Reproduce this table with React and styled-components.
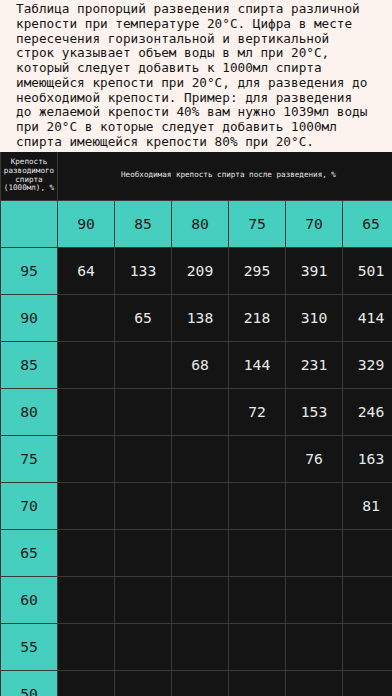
import React from "react";
import styled, { createGlobalStyle } from "styled-components";

const GlobalStyle = createGlobalStyle`
  html, body {
    margin: 0;
    padding: 0;
    overflow: hidden;
    background: #fcf2ee;
  }
`;

const strengths = [90, 85, 80, 75, 70, 65];

const rows = [
  { from: 95, values: [64, 133, 209, 295, 391, 501] },
  { from: 90, values: [null, 65, 138, 218, 310, 414] },
  { from: 85, values: [null, null, 68, 144, 231, 329] },
  { from: 80, values: [null, null, null, 72, 153, 246] },
  { from: 75, values: [null, null, null, null, 76, 163] },
  { from: 70, values: [null, null, null, null, null, 81] },
  { from: 65, values: [] },
  { from: 60, values: [] },
  { from: 55, values: [] },
  { from: 50, values: [] },
  { from: 45, values: [] },
];

const App = () => {
  return (
    <Page>
      <GlobalStyle />
      <Intro>
        Таблица пропорций разведения спирта различной крепости при
        температуре 20°C. Цифра в месте пересечения горизонтальной и
        вертикальной строк указывает объем воды в мл при 20°C, который
        следует добавить к 1000мл спирта имеющейся крепости при 20°C, для
        разведения до необходимой крепости. Пример: для разведения до
        желаемой крепости 40% вам нужно 1039мл воды при 20°C в которые
        следует добавить 1000мл спирта имеющейся крепости 80% при 20°C.
      </Intro>
      <TableWrap>
        <Grid>
          <HeadCell>
            Крепость
            <br />
            разводимого
            <br />
            спирта
            <br />
            (1000мл), %
          </HeadCell>
          <HeadCell $span={6}>
            Необходимая крепость спирта после разведения, %
          </HeadCell>
          <Cell $accent />
          {strengths.map((s) => (
            <Cell key={s} $accent>
              {s}
            </Cell>
          ))}
          {rows.map((row) => (
            <React.Fragment key={row.from}>
              <Cell $accent>{row.from}</Cell>
              {strengths.map((s, i) => (
                <Cell key={s}>{row.values[i] ?? ""}</Cell>
              ))}
            </React.Fragment>
          ))}
        </Grid>
      </TableWrap>
    </Page>
  );
};

const Page = styled.div`
  width: 392px;
  height: 696px;
  overflow: hidden;
  background: #fcf2ee;
`;

const Intro = styled.p`
  margin: 0;
  padding: 2px 20px 2px 16px;
  font-family: "DejaVu Sans Mono", monospace;
  font-size: 12.7px;
  line-height: 14.75px;
  color: #161616;
`;

const TableWrap = styled.div`
  width: 392px;
  overflow: hidden;
  background: #141414;
`;

const Grid = styled.div`
  display: grid;
  grid-template-columns: repeat(7, 56px);
  grid-auto-rows: 46px;
  grid-template-rows: 48px;
  gap: 1px;
  padding-left: 1px;
  width: max-content;
  background: #3b3b36;
  font-family: "DejaVu Sans Mono", monospace;
`;

const HeadCell = styled.div`
  grid-column: span ${(p) => p.$span || 1};
  display: flex;
  align-items: center;
  justify-content: center;
  text-align: center;
  background: #141414;
  color: #e4e4e4;
  font-size: 7.6px;
  line-height: 8.6px;
`;

const Cell = styled.div`
  display: flex;
  align-items: center;
  justify-content: center;
  background: ${(p) => (p.$accent ? "#46cfbf" : "#141414")};
  color: ${(p) => (p.$accent ? "#1a1a1a" : "#e8e8e8")};
  font-size: 14.7px;
`;

export default App;
